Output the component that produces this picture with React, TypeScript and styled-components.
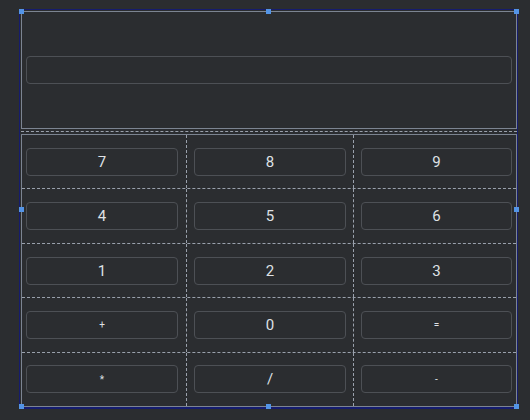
import styled, { createGlobalStyle } from 'styled-components';

const GlobalStyle = createGlobalStyle`
  html, body {
    margin: 0;
    padding: 0;
    background: #2b2d30;
  }
  body {
    font-family: Roboto, "DejaVu Sans", sans-serif;
  }
`;

type Pos = 'left' | 'mid' | 'right';

const keys: { label: string; small?: boolean }[][] = [
  [{ label: '7' }, { label: '8' }, { label: '9' }],
  [{ label: '4' }, { label: '5' }, { label: '6' }],
  [{ label: '1' }, { label: '2' }, { label: '3' }],
  [{ label: '+', small: true }, { label: '0' }, { label: '=', small: true }],
  [{ label: '*', small: true }, { label: '/' }, { label: '-', small: true }],
];

const positions: Pos[] = ['left', 'mid', 'right'];

// handle spots on the selection frame (relative to the frame box)
const handles = [
  { x: 0, y: 0 }, { x: 247, y: 0 }, { x: 495, y: 0 },
  { x: 0, y: 198 }, { x: 495, y: 198 },
  { x: 0, y: 395 }, { x: 247, y: 395 }, { x: 495, y: 395 },
];

const App = () => {
  return (
    <>
      <GlobalStyle />
      <Page>
        <Frame>
          <Display>
            <Field />
          </Display>
          <Separator />
          <Keypad>
            {keys.map((row, r) => (
              <Row key={r} $last={r === keys.length - 1}>
                {row.map((k, c) => (
                  <Cell key={k.label} $pos={positions[c]}>
                    <Key $small={k.small}>{k.label}</Key>
                  </Cell>
                ))}
              </Row>
            ))}
          </Keypad>
          {handles.map((h, i) => (
            <Handle key={i} style={{ left: h.x, top: h.y }} />
          ))}
        </Frame>
      </Page>
    </>
  );
};

export default App;

const Page = styled.div`
  width: 530px;
  height: 420px;
  padding: 9px 0 0 19px;
  box-sizing: border-box;
`;

const Frame = styled.div`
  position: relative;
  width: 499px;
  height: 400px;
  box-sizing: border-box;
  border: 1px solid #151c6e;
  border-bottom-width: 2px;
  padding: 1px 0 0 1px;
  display: flex;
  flex-direction: column;
`;

const Display = styled.div`
  height: 118px;
  box-sizing: border-box;
  border: 1px solid #7c8491;
  padding: 0 4px;
  display: flex;
  align-items: center;
`;

const Field = styled.div`
  width: 100%;
  height: 28px;
  box-sizing: border-box;
  border: 1px solid #4d5055;
  border-radius: 4px;
`;

const Separator = styled.div`
  margin: 2px 0;
  border-top: 1px dashed #9aa1ac;
`;

const Keypad = styled.div`
  flex: 1;
  box-sizing: border-box;
  border: 1px solid #7c8491;
  display: flex;
  flex-direction: column;
`;

const Row = styled.div<{ $last?: boolean }>`
  flex: 1;
  display: grid;
  grid-template-columns: 165px 167px 1fr;
  border-bottom: ${p => (p.$last ? 'none' : '1px dashed #9aa1ac')};
`;

const Cell = styled.div<{ $pos: Pos }>`
  display: flex;
  align-items: center;
  padding: ${p => (p.$pos === 'left' ? '0 8px 0 4px' : p.$pos === 'mid' ? '0 7px' : '0 4px 0 7px')};
  border-right: ${p => (p.$pos === 'right' ? 'none' : '1px dashed #9aa1ac')};
`;

const Key = styled.div<{ $small?: boolean }>`
  width: 100%;
  height: 28px;
  box-sizing: border-box;
  border: 1px solid #4d5055;
  border-radius: 4px;
  display: flex;
  align-items: center;
  justify-content: center;
  color: #dfe1e5;
  font-size: ${p => (p.$small ? '10px' : '15px')};
`;

const Handle = styled.div`
  position: absolute;
  width: 5px;
  height: 5px;
  margin: -1px 0 0 -1px;
  background: #5394e6;
`;
